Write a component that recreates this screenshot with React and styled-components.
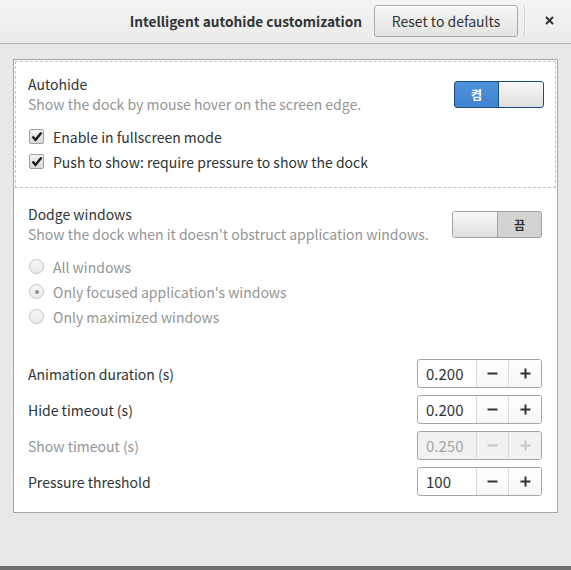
import React from "react";
import styled, { createGlobalStyle, css } from "styled-components";

const GlobalStyle = createGlobalStyle`
  html, body {
    margin: 0;
    padding: 0;
    background: #e8e8e7;
  }
  body {
    font-family: "Noto Sans CJK KR", "Noto Sans", sans-serif;
    font-size: 14px;
    color: #2e3436;
  }
`;

const Window = styled.div`
  width: 571px;
  height: 566px;
  border-bottom: 4px solid #6e6e6e;
  background: #e8e8e7;
  display: flex;
  flex-direction: column;
`;

const HeaderBar = styled.header`
  height: 41px;
  flex-shrink: 0;
  display: flex;
  align-items: center;
  justify-content: flex-end;
  padding: 0 4px 2px 0;
  background: linear-gradient(to bottom, #f4f4f3, #ebebea);
  border-bottom: 1px solid #b4b4b2;
`;

const HeaderTitle = styled.h1`
  margin: 0 12px 0 0;
  font-size: 13.7px;
  font-weight: 700;
  color: #2e3436;
`;

const HeaderButton = styled.button`
  height: 32px;
  width: 144px;
  padding: 0 12px;
  font: inherit;
  font-size: 14px;
  color: #2e3436;
  border: 1px solid #a9a9a7;
  border-radius: 3px;
  background: linear-gradient(to bottom, #f6f6f5, #e3e3e1);
  box-shadow: inset 0 1px #ffffff;
`;

const HeaderSeparator = styled.div`
  width: 1px;
  height: 32px;
  margin: 0 6px;
  background: #d2d2d0;
  box-shadow: 1px 0 #f8f8f8;
`;

const CloseButton = styled.button`
  width: 36px;
  height: 32px;
  border: none;
  background: transparent;
  display: flex;
  align-items: center;
  justify-content: center;
  padding: 0;
`;

const Content = styled.main`
  padding: 15px 13px 0;
`;

const Frame = styled.section`
  background: #ffffff;
  border: 1px solid #a6a6a4;
  padding: 1px 1px 16px;
`;

const DashedBox = styled.div`
  border: 1px dashed #c4c4c2;
  padding: 12px 11px 13px 12px;
`;

const Section = styled.div`
  padding: ${({ $padding }) => $padding || "0"};
`;

const SettingRow = styled.div`
  display: flex;
  align-items: center;
  justify-content: space-between;
`;

const TextBlock = styled.div`
  display: flex;
  flex-direction: column;
`;

const Label = styled.span`
  line-height: 20px;
  color: ${({ $dim }) => ($dim ? "#939696" : "#2e3436")};
`;

const OptionList = styled.div`
  margin-top: 10px;
  display: flex;
  flex-direction: column;
  padding-left: 1px;
`;

const OptionRow = styled.label`
  display: flex;
  align-items: center;
  gap: 9px;
  height: 25px;
  color: ${({ $dim }) => ($dim ? "#939696" : "#2e3436")};
`;

const CheckBox = styled.span`
  width: 13px;
  height: 13px;
  border: 1px solid #9f9f9d;
  border-radius: 2px;
  background: linear-gradient(to bottom, #f3f3f2, #d9d9d7);
  display: flex;
  align-items: center;
  justify-content: center;
`;

const Radio = styled.span`
  width: 13px;
  height: 13px;
  border: 1px solid #c3c3c1;
  border-radius: 50%;
  background: linear-gradient(to bottom, #f7f7f6, #ebebe9);
  display: flex;
  align-items: center;
  justify-content: center;

  &::after {
    content: "";
    width: 4px;
    height: 4px;
    border-radius: 50%;
    background: ${({ $checked }) => ($checked ? "#8f9191" : "transparent")};
  }
`;

const Switch = styled.div`
  width: 88px;
  height: 25px;
  border-radius: 3px;
  display: flex;
  overflow: hidden;
  flex-shrink: 0;
  ${({ $on }) =>
    $on
      ? css`
          border: 1px solid #1b4b80;
          background: linear-gradient(to bottom, #4f92dc, #3f84d0);
          flex-direction: row;
        `
      : css`
          border: 1px solid #a2a2a0;
          background: #d3d3d1;
          flex-direction: row-reverse;
        `}
`;

const SwitchText = styled.span`
  flex: 1;
  display: flex;
  align-items: center;
  justify-content: center;
  font-size: 12px;
  font-weight: 700;
  color: ${({ $on }) => ($on ? "#ffffff" : "#2e3436")};
`;

const SwitchKnob = styled.span`
  width: 44px;
  background: linear-gradient(to bottom, #f8f8f7, #dededc);
  ${({ $on }) =>
    $on
      ? css`border-left: 1px solid #1b4b80;`
      : css`border-right: 1px solid #a2a2a0;`}
`;

const SpinList = styled.div`
  margin-top: 30px;
  padding: 0 14px 0 13px;
  display: flex;
  flex-direction: column;
  gap: 7px;
`;

const SpinRow = styled.div`
  display: flex;
  align-items: center;
  justify-content: space-between;
`;

const SpinButton = styled.div`
  display: flex;
  height: 27px;
  border: 1px solid #a6a6a4;
  border-radius: 3px;
  overflow: hidden;
  background: ${({ $disabled }) => ($disabled ? "#f1f1f0" : "#ffffff")};
`;

const SpinEntry = styled.span`
  width: 50px;
  padding-left: 8px;
  display: flex;
  align-items: center;
  font-size: 15px;
  color: ${({ $disabled }) => ($disabled ? "#a2a4a4" : "#2e3436")};
`;

const SpinStep = styled.span`
  width: ${({ $w }) => $w}px;
  border-left: 1px solid #dcdcda;
  display: flex;
  align-items: center;
  justify-content: center;
  background: ${({ $disabled }) =>
    $disabled ? "#f1f1f0" : "linear-gradient(to bottom, #ffffff, #f6f6f5)"};
`;

const CheckIcon = () => (
  <svg width="12" height="11" viewBox="0 0 12 11">
    <path d="M1.5 5.5 L4.5 8.8 L10.5 1.5" fill="none" stroke="#1c1f20" strokeWidth="2.4" />
  </svg>
);

const MinusIcon = ({ color }) => (
  <svg width="11" height="11" viewBox="0 0 11 11">
    <path d="M0.5 5.5 H10.5" stroke={color} strokeWidth="2" />
  </svg>
);

const PlusIcon = ({ color }) => (
  <svg width="11" height="11" viewBox="0 0 11 11">
    <path d="M0.5 5.5 H10.5 M5.5 0.5 V10.5" stroke={color} strokeWidth="2" />
  </svg>
);

const CloseIcon = () => (
  <svg width="9" height="9" viewBox="0 0 9 9">
    <path d="M1 1 L8 8 M8 1 L1 8" stroke="#2e3436" strokeWidth="2" />
  </svg>
);

const ToggleSwitch = ({ on }) => (
  <Switch $on={on}>
    <SwitchText $on={on}>{on ? "켬" : "끔"}</SwitchText>
    <SwitchKnob $on={on} />
  </Switch>
);

const Spin = ({ value, disabled }) => {
  const color = disabled ? "#c4c6c6" : "#2e3436";
  return (
    <SpinButton $disabled={disabled}>
      <SpinEntry $disabled={disabled}>{value}</SpinEntry>
      <SpinStep $w={31} $disabled={disabled}>
        <MinusIcon color={color} />
      </SpinStep>
      <SpinStep $w={32} $disabled={disabled}>
        <PlusIcon color={color} />
      </SpinStep>
    </SpinButton>
  );
};

const radios = [
  { label: "All windows", checked: false },
  { label: "Only focused application's windows", checked: true },
  { label: "Only maximized windows", checked: false },
];

const spins = [
  { label: "Animation duration (s)", value: "0.200" },
  { label: "Hide timeout (s)", value: "0.200" },
  { label: "Show timeout (s)", value: "0.250", disabled: true },
  { label: "Pressure threshold", value: "100" },
];

const App = () => (
  <>
    <GlobalStyle />
    <Window>
      <HeaderBar>
        <HeaderTitle>Intelligent autohide customization</HeaderTitle>
        <HeaderButton>Reset to defaults</HeaderButton>
        <HeaderSeparator />
        <CloseButton>
          <CloseIcon />
        </CloseButton>
      </HeaderBar>
      <Content>
        <Frame>
          <DashedBox>
            <SettingRow>
              <TextBlock>
                <Label>Autohide</Label>
                <Label $dim>Show the dock by mouse hover on the screen edge.</Label>
              </TextBlock>
              <ToggleSwitch on />
            </SettingRow>
            <OptionList>
              <OptionRow>
                <CheckBox>
                  <CheckIcon />
                </CheckBox>
                Enable in fullscreen mode
              </OptionRow>
              <OptionRow>
                <CheckBox>
                  <CheckIcon />
                </CheckBox>
                Push to show: require pressure to show the dock
              </OptionRow>
            </OptionList>
          </DashedBox>
          <Section $padding="16px 14px 0 13px">
            <SettingRow>
              <TextBlock>
                <Label>Dodge windows</Label>
                <Label $dim>Show the dock when it doesn't obstruct application windows.</Label>
              </TextBlock>
              <ToggleSwitch on={false} />
            </SettingRow>
            <OptionList>
              {radios.map((r) => (
                <OptionRow key={r.label} $dim>
                  <Radio $checked={r.checked} />
                  {r.label}
                </OptionRow>
              ))}
            </OptionList>
          </Section>
          <SpinList>
            {spins.map((s) => (
              <SpinRow key={s.label}>
                <Label $dim={s.disabled}>{s.label}</Label>
                <Spin value={s.value} disabled={s.disabled} />
              </SpinRow>
            ))}
          </SpinList>
        </Frame>
      </Content>
    </Window>
  </>
);

export default App;
